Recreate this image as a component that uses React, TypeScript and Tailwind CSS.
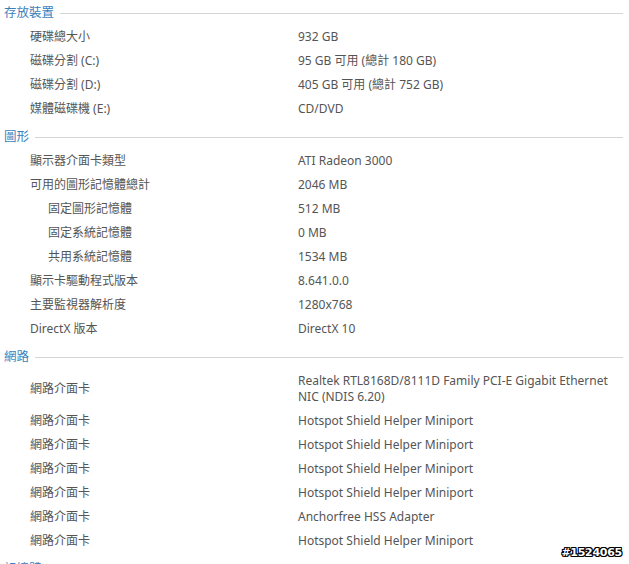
import React from 'react';

type Row = { label: string; value: React.ReactNode; indent?: boolean; tall?: boolean };

const sections: { title: string; rows: Row[] }[] = [
  {
    title: '存放裝置',
    rows: [
      { label: '硬碟總大小', value: '932 GB' },
      { label: '磁碟分割 (C:)', value: '95 GB 可用 (總計 180 GB)' },
      { label: '磁碟分割 (D:)', value: '405 GB 可用 (總計 752 GB)' },
      { label: '媒體磁碟機 (E:)', value: 'CD/DVD' },
    ],
  },
  {
    title: '圖形',
    rows: [
      { label: '顯示器介面卡類型', value: 'ATI Radeon 3000' },
      { label: '可用的圖形記憶體總計', value: '2046 MB' },
      { label: '固定圖形記憶體', value: '512 MB', indent: true },
      { label: '固定系統記憶體', value: '0 MB', indent: true },
      { label: '共用系統記憶體', value: '1534 MB', indent: true },
      { label: '顯示卡驅動程式版本', value: '8.641.0.0' },
      { label: '主要監視器解析度', value: '1280x768' },
      { label: 'DirectX 版本', value: 'DirectX 10' },
    ],
  },
  {
    title: '網路',
    rows: [
      {
        label: '網路介面卡',
        value: (
          <>
            Realtek RTL8168D/8111D Family PCI-E Gigabit Ethernet
            <br />
            NIC (NDIS 6.20)
          </>
        ),
        tall: true,
      },
      { label: '網路介面卡', value: 'Hotspot Shield Helper Miniport' },
      { label: '網路介面卡', value: 'Hotspot Shield Helper Miniport' },
      { label: '網路介面卡', value: 'Hotspot Shield Helper Miniport' },
      { label: '網路介面卡', value: 'Hotspot Shield Helper Miniport' },
      { label: '網路介面卡', value: 'Anchorfree HSS Adapter' },
      { label: '網路介面卡', value: 'Hotspot Shield Helper Miniport' },
    ],
  },
  { title: '記憶體', rows: [] },
];

export default function App() {
  return (
    <div
      className="relative w-[629px] h-[564px] overflow-hidden bg-white text-[12px] text-[#555555]"
      style={{ fontFamily: '"Noto Sans", "Noto Sans CJK TC", sans-serif' }}
    >
      <div className="flex flex-col gap-1 pt-[1px]">
        {sections.map((s) => (
          <div key={s.title} className="flex flex-col">
            {/* Section header */}
            <div className="flex h-[24px] items-center pl-[4px] pr-[6px]">
              <span className="text-[12.5px] leading-none text-[#3a7fbd]">{s.title}</span>
              <div className="ml-[6px] h-px flex-1 bg-[#d4d4d4]" />
            </div>
            {s.rows.map((r, i) => (
              <div
                key={i}
                className={`flex items-center ${r.tall ? 'h-[40px]' : 'h-[24px]'}`}
              >
                <div className={`w-[298px] shrink-0 ${r.indent ? 'pl-[48px]' : 'pl-[30px]'}`}>
                  {r.label}
                </div>
                <div className="leading-[16px]">{r.value}</div>
              </div>
            ))}
          </div>
        ))}
      </div>

      {/* watermark */}
      <div
        className="absolute right-[7px] top-[547px] text-[11px] font-bold leading-none tracking-tight text-white"
        style={{
          fontFamily: '"DejaVu Sans", sans-serif',
          textShadow:
            '1px 0 0 #000, -1px 0 0 #000, 0 1px 0 #000, 0 -1px 0 #000, 1px 1px 0 #000, -1px -1px 0 #000, 1px -1px 0 #000, -1px 1px 0 #000',
        }}
      >
        #1524065
      </div>
    </div>
  );
}
